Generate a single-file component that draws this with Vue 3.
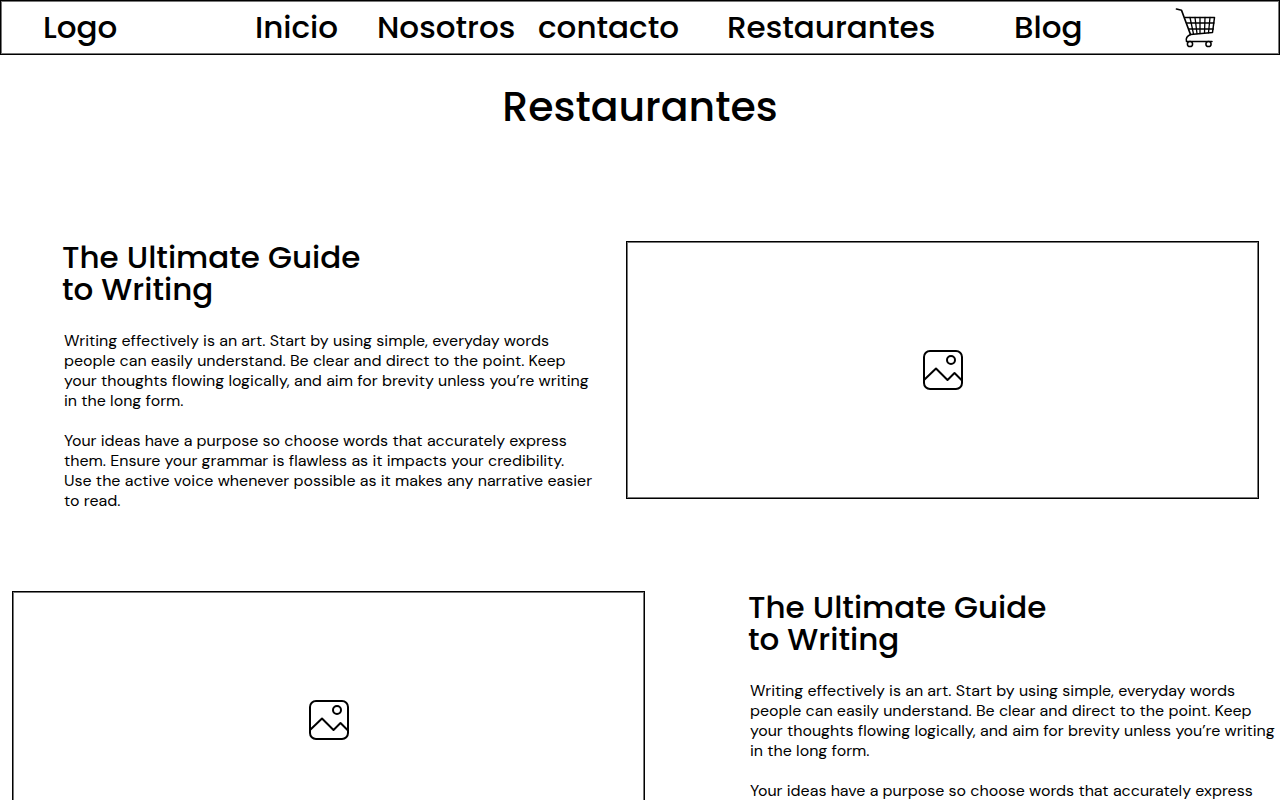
<script setup>
const links = ['Inicio', 'Nosotros', 'contacto', 'Restaurantes', 'Blog']

const paragraphs = [
  [
    'Writing effectively is an art. Start by using simple, everyday words',
    'people can easily understand. Be clear and direct to the point. Keep',
    'your thoughts flowing logically, and aim for brevity unless you’re writing',
    'in the long form.',
  ],
  [
    'Your ideas have a purpose so choose words that accurately express',
    'them. Ensure your grammar is flawless as it impacts your credibility.',
    'Use the active voice whenever possible as it makes any narrative easier',
    'to read.',
  ],
]

const articles = [
  { id: 1, flipped: false },
  { id: 2, flipped: true },
]
</script>

<template>
  <div class="page">
    <header>
      <nav class="bar" aria-label="Principal">
        <a class="logo" href="#">Logo</a>
        <a v-for="link in links" :key="link" href="#">{{ link }}</a>
        <a class="cart" href="#" aria-label="Carrito">
          <svg width="42" height="42" viewBox="0 -1 42 42" fill="none" stroke="#000" stroke-linecap="round" stroke-linejoin="round">
            <path d="M1.500 2 6.500 3.300 15.500 27.500" stroke-width="1.700" />
            <path d="M10 10.500H39.500L37.500 25.500 15.500 27.500C12 29 10.500 31 11.500 34.500H37" stroke-width="1.500" />
            <path d="M12 16H39M14 22H38.300M15 10.500 18.500 27M20 10.500 22 26.700M25 10.500V26.500M30 10.500 29.500 26.200M35 10.500 33.500 25.800" stroke-width="1.300" />
            <circle cx="15" cy="37" r="2.600" fill="#fff" stroke-width="1.500" />
            <circle cx="33.500" cy="37" r="2.600" fill="#fff" stroke-width="1.500" />
          </svg>
        </a>
      </nav>
    </header>
    <main>
      <h1>Restaurantes</h1>
      <article v-for="article in articles" :key="article.id" class="row" :class="{ flipped: article.flipped }">
        <div class="copy">
          <h2>The Ultimate Guide<br />to Writing</h2>
          <p v-for="(lines, i) in paragraphs" :key="i">
            <template v-for="(line, n) in lines" :key="n"><br v-if="n" />{{ line }}</template>
          </p>
        </div>
        <div class="picture" role="img" aria-label="Imagen">
          <svg width="40" height="40" viewBox="0 0 40 40" fill="none" stroke="#000" stroke-width="2" stroke-linejoin="round">
            <rect x="1" y="1" width="38" height="38" rx="6" />
            <circle cx="28" cy="10" r="4" />
            <path d="M1 30 13 18.500 24.500 30 31.500 23 39 30.500" />
          </svg>
        </div>
      </article>
    </main>
  </div>
</template>

<style>
body {
  margin: 0;
  background: #fff;
}
</style>

<style scoped>
.page {
  color: #000;
  font-family: Poppins, Inter, "Liberation Sans", sans-serif;
}

.bar {
  display: grid;
  grid-template-columns: 212fr 122fr 161fr 189fr 287fr 161fr 104fr;
  align-items: center;
  box-sizing: border-box;
  height: 55px;
  padding: 0 0 2px 42px;
  border: 1px solid #000;
  box-shadow: inset 0 0 0 1px #777;
}

.bar a {
  color: inherit;
  font-size: 31px;
  font-weight: 500;
  line-height: 40px;
  text-decoration: none;
  white-space: nowrap;
}

.cart svg {
  display: block;
}

h1 {
  margin: 27px 0 109px;
  font-size: 41px;
  font-weight: 500;
  line-height: 50px;
  text-align: center;
}

.row {
  display: grid;
  grid-template-columns: 564fr 633fr;
  align-items: start;
  margin-bottom: 80px;
  padding: 0 21px 0 62px;
}

.row.flipped {
  grid-template-columns: 633fr 532fr;
  column-gap: 103px;
  padding: 0 0 0 12px;
}

.flipped .copy {
  order: 1;
}

h2 {
  margin: 0 0 26px;
  font-size: 31px;
  font-weight: 500;
  line-height: 32px;
}

p {
  margin: 0 0 20px;
  padding-left: 2px;
  font-family: "DM Sans", Inter, "Liberation Sans", sans-serif;
  font-size: 16px;
  line-height: 20px;
  white-space: nowrap;
}

p:last-child {
  margin-bottom: 0;
}

.picture {
  display: flex;
  align-items: center;
  justify-content: center;
  box-sizing: border-box;
  height: 258px;
  border: 1px solid #000;
  box-shadow: inset 0 0 0 1px #777;
}
</style>
